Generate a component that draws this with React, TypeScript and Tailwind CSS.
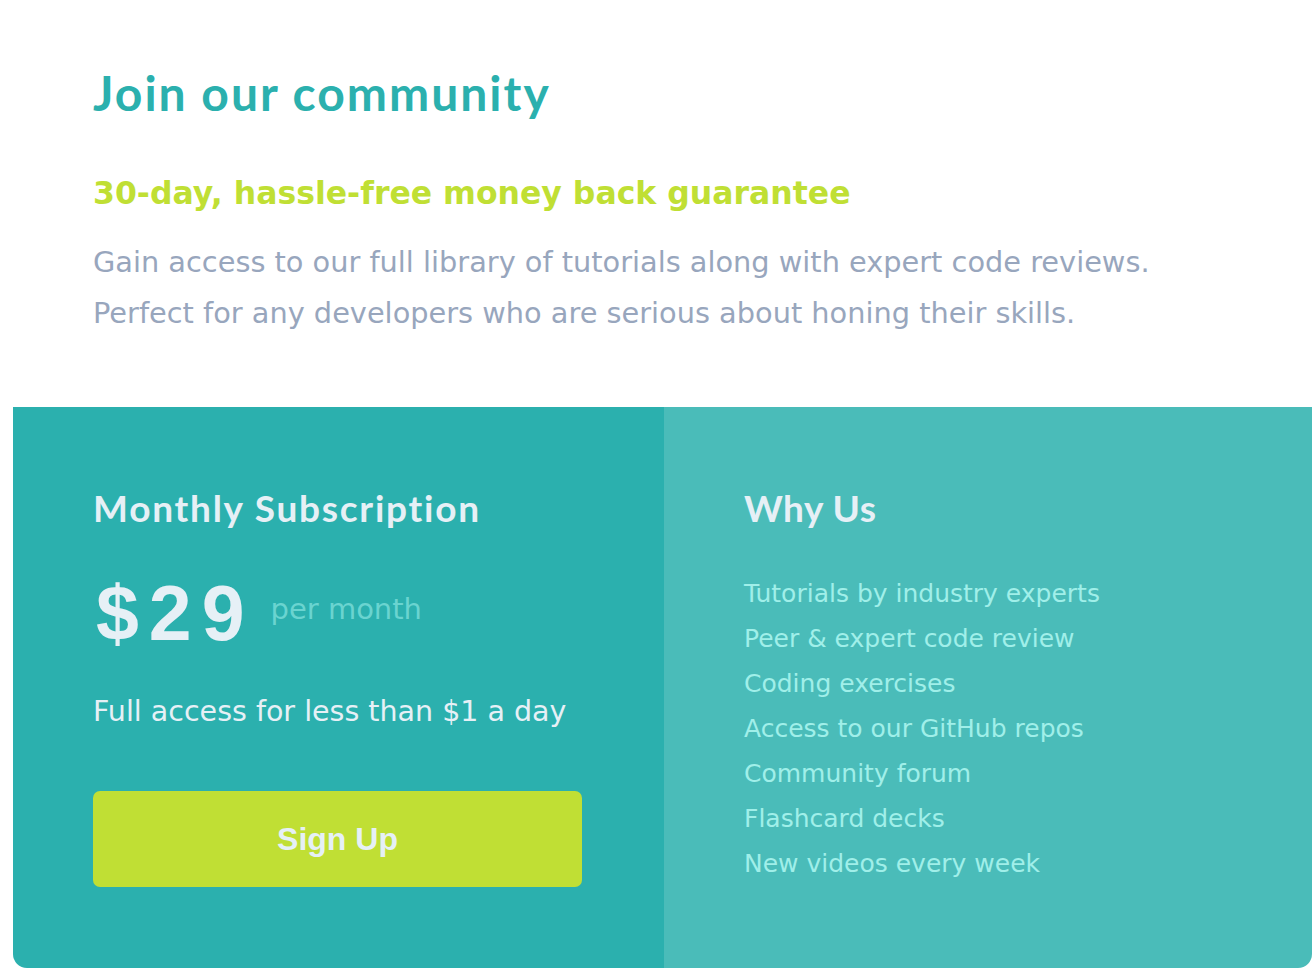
const features = [
  'Tutorials by industry experts',
  'Peer & expert code review',
  'Coding exercises',
  'Access to our GitHub repos',
  'Community forum',
  'Flashcard decks',
  'New videos every week',
];

export default function App() {
  return (
    <div className="min-h-screen bg-white pl-[13px] font-['DejaVu_Sans',sans-serif]">
      <div className="w-[1299px]">
        {/* Intro */}
        <section className="h-[407px] px-[80px] pt-[69px]">
          <h1 className="font-['Lato',sans-serif] text-[48px] leading-none font-bold tracking-[2px] text-[#2bb0ae]">
            Join our community
          </h1>
          <h2 className="mt-[61px] text-[31.5px] leading-none font-bold text-[#c0df34]">
            30-day, hassle-free money back guarantee
          </h2>
          <p className="mt-[27px] text-[28.8px] leading-[51px] text-[#98a6bd]">
            Gain access to our full library of tutorials along with expert code reviews.
            <br />
            Perfect for any developers who are serious about honing their skills.
          </p>
        </section>

        {/* Pricing */}
        <div className="grid grid-cols-[651px_1fr] h-[561px] rounded-b-[14px] overflow-hidden">
          <div className="bg-[#2bb0ae] pl-[80px] pr-[69px] pt-[82px]">
            <h3 className="font-['Lato',sans-serif] text-[37px] leading-none font-bold tracking-[1.75px] text-[#e6f0f6]">
              Monthly Subscription
            </h3>
            <div className="mt-[49px] flex items-start">
              <span className="ml-[3px] font-['Liberation_Sans',Arial,sans-serif] text-[77px] leading-none font-bold tracking-[10px] text-[#e6f0f6]">
                $29
              </span>
              <span className="ml-[16px] mt-[20px] text-[29px] leading-none text-[#6ad4d0]">
                per month
              </span>
            </div>
            <p className="mt-[46px] text-[28.5px] leading-none text-[#e6f0f6]">
              Full access for less than $1 a day
            </p>
            <button className="mt-[64px] w-[489px] h-[96px] rounded-[7px] bg-[#c0df34] font-['Liberation_Sans',Arial,sans-serif] text-[32px] font-bold text-[#e6f0f6]">
              Sign Up
            </button>
          </div>
          <div className="bg-[#4abcb9] pl-[80px] pt-[82px]">
            <h3 className="font-['Lato',sans-serif] text-[37px] leading-none font-bold tracking-[0.5px] text-[#e6f0f6]">
              Why Us
            </h3>
            <ul className="mt-[45px]">
              {features.map((f) => (
                <li key={f} className="text-[25px] leading-[45px] text-[#a0efe9]">
                  {f}
                </li>
              ))}
            </ul>
          </div>
        </div>
      </div>
    </div>
  );
}
